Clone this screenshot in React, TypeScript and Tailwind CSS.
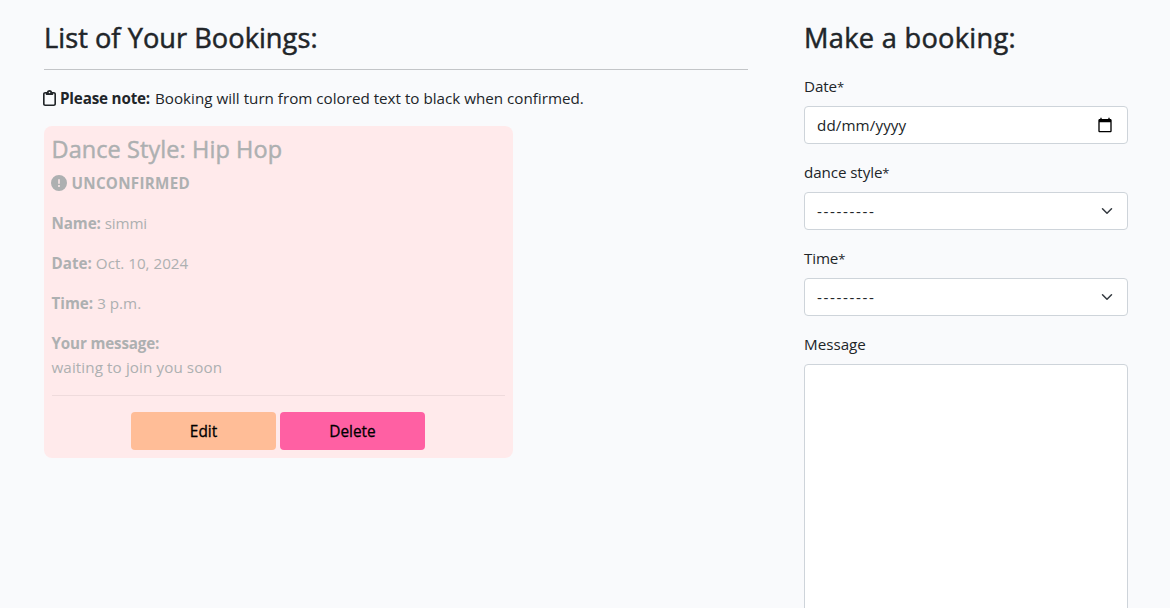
import type { ReactNode } from "react";
import { FaRegClipboard, FaCircleExclamation } from "react-icons/fa6";

function Field({ label, children }: { label: ReactNode; children: ReactNode }) {
  return (
    <div className="mb-4">
      <div className="mb-2 h-6 text-[15.2px] leading-6">{label}</div>
      {children}
    </div>
  );
}

function Required({ text, className }: { text: string; className: string }) {
  return (
    <>
      <span className={className}>{text}</span>
      <span className="text-[13px]">*</span>
    </>
  );
}

function SelectBox() {
  return (
    <div className="flex h-[38px] items-center justify-between rounded border border-[#ced4da] bg-white pl-3 pr-3">
      <span className="tracking-[1.6px]">---------</span>
      <svg className="h-3 w-4" viewBox="0 0 16 16" fill="none" stroke="#343a40" strokeWidth="2" strokeLinecap="round" strokeLinejoin="round">
        <path d="m2 5 6 6 6-6" />
      </svg>
    </div>
  );
}

export default function App() {
  return (
    <div className="flex h-[608px] overflow-hidden bg-[#f9fafc] pl-11 pt-5 font-['Open_Sans',sans-serif] text-[15.2px] leading-6 text-[#212529]">
      <main className="mr-14 w-[704px] shrink-0">
        <h2 className="h-[49px] text-[27.2px] leading-[36px] tracking-[0.04px] [-webkit-text-stroke:0.5px_currentColor]">List of Your Bookings:</h2>
        <hr className="mb-4 border-t border-[#c3c5c8]" />
        <p className="mb-4 flex h-6 items-center">
          <FaRegClipboard className="-ml-px mr-1 h-4 w-[13px]" preserveAspectRatio="none" />
          <strong className="mr-[5px] font-bold tracking-[-0.17px]">Please note:</strong>
          <span>Booking will turn from colored text to black when confirmed.</span>
        </p>
        <section className="h-[332px] w-[469px] rounded-lg bg-[#ffeaeb] py-2 pl-[7.5px] pr-[8.5px] text-[#adb0b1]">
          <h3 className="mb-2 h-[29px] text-[23.5px] leading-[31px] tracking-[0.08px] [-webkit-text-stroke:0.45px_currentColor]">Dance Style: Hip Hop</h3>
          <p className="mb-4 flex h-6 items-center">
            <FaCircleExclamation className="-ml-[0.5px] mr-[4.5px] size-4" />
            <strong className="font-bold tracking-[0.28px]">UNCONFIRMED</strong>
          </p>
          <p className="mb-4 flex h-6 gap-1">
            <strong className="tracking-[-0.1px]">Name:</strong>
            <span className="tracking-[-0.15px]">simmi</span>
          </p>
          <p className="mb-4 flex h-6 gap-1">
            <strong>Date:</strong>
            <span>Oct. 10, 2024</span>
          </p>
          <p className="mb-4 flex h-6 gap-1">
            <strong>Time:</strong>
            <span>3 p.m.</span>
          </p>
          <p className="mb-4 h-12">
            <strong className="tracking-[-0.15px]">Your message:</strong>
            <br />
            <span className="tracking-[0.1px]">waiting to join you soon</span>
          </p>
          <hr className="mb-4 border-t border-[#efdbdc]" />
          <div className="flex gap-1 pl-[79.5px] text-[15.4px] text-black [-webkit-text-stroke:0.3px_currentColor]">
            <button className="h-[38px] w-[145px] rounded bg-[#ffbd97] pt-0.5">Edit</button>
            <button className="h-[38px] w-[145px] rounded bg-[#ff60a3] pt-0.5">Delete</button>
          </div>
        </section>
      </main>
      <aside className="w-[324px] shrink-0">
        <h2 className="mb-[18px] h-9 text-[27.2px] leading-[36px] tracking-[0.3px] [-webkit-text-stroke:0.5px_currentColor]">Make a booking:</h2>
        <Field label={<Required text="Date" className="tracking-[-0.1px]" />}>
          <div className="flex h-[38px] items-center justify-between rounded border border-[#ced4da] bg-white pl-3 pr-[14px]">
            <span className="tracking-[0.1px]">dd/mm/yyyy</span>
            <svg className="h-4 w-4" viewBox="0 0 24 24" fill="#000">
              <path d="M20 3h-1V1h-2v2H7V1H5v2H4c-1.1 0-2 .9-2 2v16c0 1.1.9 2 2 2h16c1.1 0 2-.9 2-2V5c0-1.1-.9-2-2-2zm0 18H4V8h16v13z" />
            </svg>
          </div>
        </Field>
        <Field label={<Required text="dance style" className="tracking-[-0.1px]" />}>
          <SelectBox />
        </Field>
        <Field label={<Required text="Time" className="tracking-[-0.15px]" />}>
          <SelectBox />
        </Field>
        <Field label="Message">
          <div className="h-[262px] rounded border border-[#ced4da] bg-white" />
        </Field>
      </aside>
    </div>
  );
}
